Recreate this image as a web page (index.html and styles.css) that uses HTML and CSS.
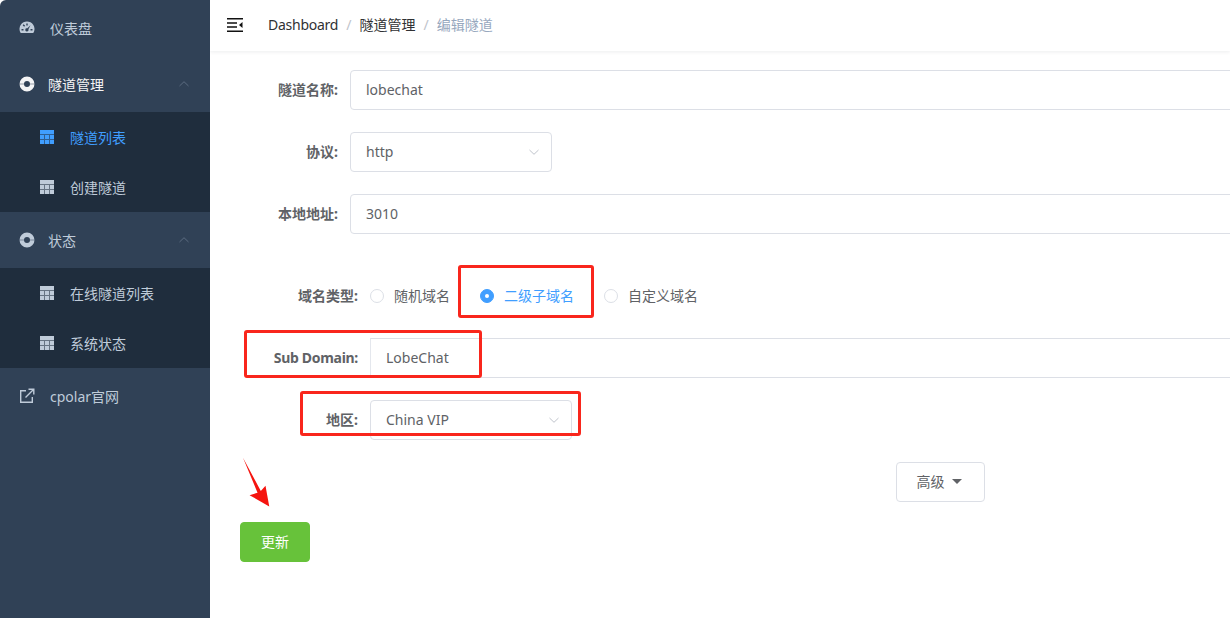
FILE: index.html
```html
<!DOCTYPE html>
<html lang="zh-CN">
<head>
<meta charset="utf-8">
<title>编辑隧道</title>
<link rel="stylesheet" href="styles.css">
</head>
<body>
<svg class="sprite" width="0" height="0" aria-hidden="true">
  <symbol id="i-table" viewBox="0 0 14 14">
    <rect width="14" height="14" fill="currentColor" opacity=".45"/>
    <path fill="currentColor" d="M0 0h14v4H0zM0 5h4v4H0zM5 5h4v4H5zM10 5h4v4h-4zM0 10h4v4H0zM5 10h4v4H5zM10 10h4v4h-4z"/>
  </symbol>
  <symbol id="i-ring" viewBox="0 0 16 16">
    <path fill="currentColor" fill-rule="evenodd" d="M8 .5a7.500 7.500 0 1 1 0 15 7.500 7.500 0 0 1 0-15zM8 5a3 3 0 1 0 0 6 3 3 0 0 0 0-6z"/>
    <path fill="none" stroke="#304156" stroke-width=".7" opacity=".7" d="M0 8h5.200M10.800 8H16"/>
  </symbol>
  <symbol id="i-chev" viewBox="0 0 12 8">
    <path fill="none" stroke="currentColor" stroke-width="1" d="M1.500 6 6 1.700 10.500 6"/>
  </symbol>
</svg>

<div class="app">
  <aside class="sidebar">
    <a class="menu-item">
      <svg class="ic ic-lead" viewBox="0 0 16 16"><path fill="currentColor" fill-rule="evenodd" d="M8 1.500a7.500 7.500 0 0 1 7 10.200c-.3.800-.8 1.300-1.500 1.300h-11c-.7 0-1.200-.5-1.500-1.300A7.500 7.500 0 0 1 8 1.500zM7.300 3.500v2h1.400v-2zM3.700 5.200l1.400 1.500 1-1-1.500-1.400zM11.500 5.300 8.400 8.300a1.600 1.600 0 1 0 1 1zM2.500 9v1.400h2V9zM11.500 9v1.400h2V9z"/></svg>
      <span class="t-lead">仪表盘</span>
    </a>

    <a class="menu-item menu-open">
      <svg class="ic ic-ring"><use href="#i-ring"/></svg>
      <span>隧道管理</span>
      <svg class="chev"><use href="#i-chev"/></svg>
    </a>
    <div class="submenu">
      <a class="sub-item sub-active"><svg class="ic-table"><use href="#i-table"/></svg><span>隧道列表</span></a>
      <a class="sub-item"><svg class="ic-table"><use href="#i-table"/></svg><span>创建隧道</span></a>
    </div>

    <a class="menu-item">
      <svg class="ic ic-ring"><use href="#i-ring"/></svg>
      <span>状态</span>
      <svg class="chev"><use href="#i-chev"/></svg>
    </a>
    <div class="submenu">
      <a class="sub-item"><svg class="ic-table"><use href="#i-table"/></svg><span>在线隧道列表</span></a>
      <a class="sub-item"><svg class="ic-table"><use href="#i-table"/></svg><span>系统状态</span></a>
    </div>

    <a class="menu-item">
      <svg class="ic ic-lead" viewBox="0 0 16 16"><path fill="none" stroke="currentColor" stroke-width="1.400" d="M7 2.700H1.700v11.600h11.600V9M6.500 9.500 14.500 1.500M9.500 1.200h5.300v5.300"/></svg>
      <span class="t-lead">cpolar官网</span>
    </a>
  </aside>

  <main class="main">
    <header class="navbar">
      <svg class="hamburger" viewBox="0 0 16 14"><path fill="#111" d="M0 0h16v1.400H0zM0 4.200h10v1.600H0zM0 8.200h10v1.600H0zM0 12.600h16V14H0zM12 7 15.500 4v6z"/></svg>
      <nav class="crumbs">
        <span class="crumb crumb-latin">Dashboard</span><span class="sep">/</span>
        <span class="crumb">隧道管理</span><span class="sep">/</span>
        <span class="crumb crumb-last">编辑隧道</span>
      </nav>
    </header>

    <form class="form">
      <div class="row">
        <label class="label">隧道名称:</label>
        <div class="input input-long">lobechat</div>
      </div>
      <div class="row">
        <label class="label">协议:</label>
        <div class="input select">http<svg class="select-chev"><use href="#i-chev"/></svg></div>
      </div>
      <div class="row row-last-basic">
        <label class="label">本地地址:</label>
        <div class="input input-long">3010</div>
      </div>

      <div class="nested">
        <div class="row row-radio">
          <label class="label">域名类型:</label>
          <div class="radios">
            <span class="radio"><i class="dot"></i>随机域名</span>
            <span class="radio radio-on"><i class="dot"></i>二级子域名</span>
            <span class="radio"><i class="dot"></i>自定义域名</span>
          </div>
        </div>
        <div class="row">
          <label class="label label-latin">Sub Domain:</label>
          <div class="input input-long input-flat">LobeChat</div>
        </div>
        <div class="row">
          <label class="label">地区:</label>
          <div class="input select">China VIP<svg class="select-chev"><use href="#i-chev"/></svg></div>
        </div>
      </div>

      <div class="adv-row"><button type="button" class="btn-adv">高级<i class="caret"></i></button></div>
      <button type="button" class="btn-submit">更新</button>
    </form>

    <div class="mark mark-radio"></div>
    <div class="mark mark-sub"></div>
    <div class="mark mark-region"></div>
    <svg class="mark-arrow" viewBox="0 0 32 52"><path fill="#f5140f" d="M0 0 19 35.500 24 30 28 52 7 40 15.500 37.500z"/></svg>
  </main>
</div>
</body>
</html>
```

FILE: styles.css
```css
* { box-sizing: border-box; }
html, body { margin: 0; height: 618px; overflow: hidden; background: #fff; }
body { font-family: "Noto Sans", "Noto Sans CJK SC", sans-serif; font-size: 14px; }
.sprite { position: absolute; }

.app { display: flex; height: 618px; }

/* sidebar */
.sidebar { width: 210px; flex: none; background: #304156; color: #bfcbd9; border-top-left-radius: 6px; }
.menu-item { display: flex; align-items: center; height: 56px; padding-left: 19px; position: relative; }
.menu-open { color: #f4f4f5; }
.ic { flex: none; }
.ic-lead { width: 16px; height: 16px; margin-right: 15px; }
.ic-ring { width: 16px; height: 16px; margin-right: 13px; }
.t-lead { position: relative; }
.chev { position: absolute; right: 20px; top: 24px; width: 12px; height: 8px; color: #5b6b80; }
.submenu { background: #1f2d3d; }
.sub-item { display: flex; align-items: center; height: 50px; padding-left: 40px; }
.ic-table { width: 14px; height: 14px; margin-right: 16px; flex: none; }
.sub-active { color: #409eff; }

/* main */
.main { flex: 1; min-width: 0; position: relative; overflow: hidden; }
.navbar { display: flex; align-items: center; height: 51px; box-shadow: 0 1px 4px rgba(0, 21, 41, .08); padding-left: 17px; }
.hamburger { width: 16px; height: 14px; margin-top: -2px; }
.crumbs { margin-left: 25px; display: flex; align-items: baseline; color: #303133; margin-top: -4px; }
.crumb-latin { letter-spacing: -.25px; }
.sep { color: #c0c4cc; margin: 0 8px; }
.crumb-last { color: #97a8be; }

.form { padding: 19px 0 0 30px; color: #606266; }
.row { display: flex; align-items: center; margin-bottom: 22px; }
.row-last-basic { margin-bottom: 42px; }
.label { width: 110px; flex: none; padding-right: 12px; padding-bottom: 2px; text-align: right; font-weight: 700; white-space: nowrap; }
.label-latin { letter-spacing: -.3px; }
.input { height: 40px; border: 1px solid #dcdfe6; border-radius: 4px; padding: 0 15px 2px; display: flex; align-items: center; flex: none; }
.input-long { width: 1000px; }
.input-flat { border-left-color: #e4e7ed; border-radius: 0; }
.select { width: 202px; position: relative; }
.select-chev { position: absolute; right: 11px; top: 15px; width: 12px; height: 8px; color: #c0c4cc; transform: rotate(180deg); }

.nested { margin-left: 20px; }
.row-radio { height: 40px; }
.radios { display: flex; padding-bottom: 3px; }
.radio { display: flex; align-items: center; margin-right: 30px; font-size: 14px; }
.dot { width: 14px; height: 14px; border: 1px solid #dcdfe6; border-radius: 50%; margin-right: 10px; flex: none; background: #fff; position: relative; top: 1px; }
.radio-on { color: #409eff; }
.radio-on .dot { background: #409eff; border-color: #409eff; }
.radio-on .dot::after { content: ""; position: absolute; left: 4px; top: 4px; width: 4px; height: 4px; border-radius: 50%; background: #fff; }

.adv-row { padding-left: 656px; }
.btn-adv { width: 89px; height: 40px; background: #fff; border: 1px solid #dcdfe6; border-radius: 4px; color: #606266; font: inherit; padding: 0 3px 2px 0; display: flex; align-items: center; justify-content: center; }
.caret { width: 0; height: 0; border: 5px solid transparent; border-top-color: #606266; border-bottom: 0; margin-left: 7px; }
.btn-submit { display: block; width: 70px; height: 40px; margin-top: 20px; background: #67c23a; border: 1px solid #67c23a; border-radius: 4px; color: #fff; font: inherit; padding: 0 0 2px; }

/* red annotations over the form */
.mark { position: absolute; border: 3px solid #f9261c; border-radius: 3px; }
.mark-radio { left: 248px; top: 265px; width: 136px; height: 53px; }
.mark-sub { left: 34px; top: 330px; width: 238px; height: 48px; }
.mark-region { left: 90px; top: 391px; width: 281px; height: 45px; }
.mark-arrow { position: absolute; left: 33px; top: 456px; width: 30px; height: 52px; }
```
